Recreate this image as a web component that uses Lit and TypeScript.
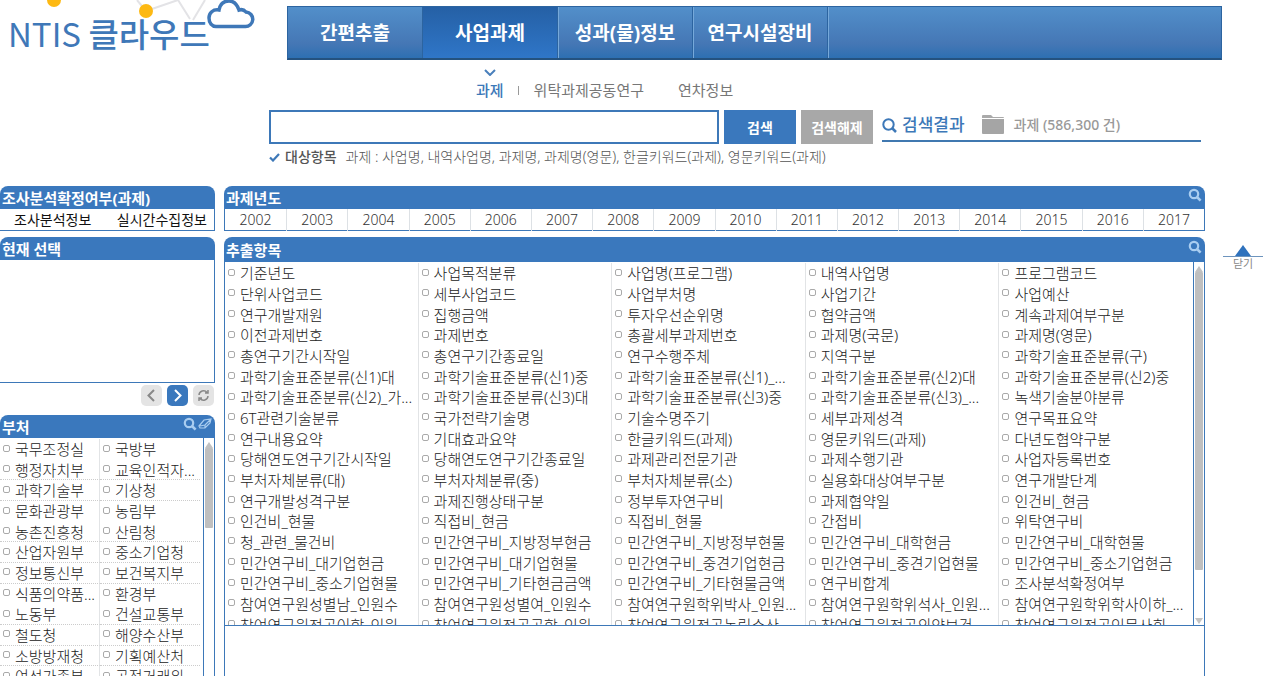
import { LitElement, html, css, svg } from "lit";
import { customElement, property } from "lit/decorators.js";
import { classMap } from "lit/directives/class-map.js";

const YEARS = Array.from({ length: 16 }, (_, i) => 2002 + i);

const FIELDS = [
  "기준년도", "사업목적분류", "사업명(프로그램)", "내역사업명", "프로그램코드",
  "단위사업코드", "세부사업코드", "사업부처명", "사업기간", "사업예산",
  "연구개발재원", "집행금액", "투자우선순위명", "협약금액", "계속과제여부구분",
  "이전과제번호", "과제번호", "총괄세부과제번호", "과제명(국문)", "과제명(영문)",
  "총연구기간시작일", "총연구기간종료일", "연구수행주체", "지역구분", "과학기술표준분류(구)",
  "과학기술표준분류(신1)대", "과학기술표준분류(신1)중", "과학기술표준분류(신1)_...", "과학기술표준분류(신2)대", "과학기술표준분류(신2)중",
  "과학기술표준분류(신2)_가...", "과학기술표준분류(신3)대", "과학기술표준분류(신3)중", "과학기술표준분류(신3)_...", "녹색기술분야분류",
  "6T관련기술분류", "국가전략기술명", "기술수명주기", "세부과제성격", "연구목표요약",
  "연구내용요약", "기대효과요약", "한글키워드(과제)", "영문키워드(과제)", "다년도협약구분",
  "당해연도연구기간시작일", "당해연도연구기간종료일", "과제관리전문기관", "과제수행기관", "사업자등록번호",
  "부처자체분류(대)", "부처자체분류(중)", "부처자체분류(소)", "실용화대상여부구분", "연구개발단계",
  "연구개발성격구분", "과제진행상태구분", "정부투자연구비", "과제협약일", "인건비_현금",
  "인건비_현물", "직접비_현금", "직접비_현물", "간접비", "위탁연구비",
  "청_관련_물건비", "민간연구비_지방정부현금", "민간연구비_지방정부현물", "민간연구비_대학현금", "민간연구비_대학현물",
  "민간연구비_대기업현금", "민간연구비_대기업현물", "민간연구비_중견기업현금", "민간연구비_중견기업현물", "민간연구비_중소기업현금",
  "민간연구비_중소기업현물", "민간연구비_기타현금금액", "민간연구비_기타현물금액", "연구비합계", "조사분석확정여부",
  "참여연구원성별남_인원수", "참여연구원성별여_인원수", "참여연구원학위박사_인원...", "참여연구원학위석사_인원...", "참여연구원학위학사이하_...",
  "참여연구원전공이학_인원...", "참여연구원전공공학_인원...", "참여연구원전공농림수산...", "참여연구원전공의약보건...", "참여연구원전공인문사회...",
];

const MINISTRIES = [
  "국무조정실", "국방부", "행정자치부", "교육인적자...", "과학기술부", "기상청",
  "문화관광부", "농림부", "농촌진흥청", "산림청", "산업자원부", "중소기업청",
  "정보통신부", "보건복지부", "식품의약품...", "환경부", "노동부", "건설교통부",
  "철도청", "해양수산부", "소방방재청", "기획예산처", "여성가족부", "공정거래위...",
];

const searchIcon = svg`<circle cx="6" cy="6" r="4.2" fill="none" stroke="currentColor" stroke-width="2.2"/><path d="M9 9l3.6 3.6" stroke="currentColor" stroke-width="2.6"/>`;

@customElement("check-list")
export class CheckList extends LitElement {
  @property({ attribute: false }) items: string[] = [];
  @property({ type: Boolean, reflect: true }) compact = false;

  static styles = css`
    :host { display: flex; min-width: 0; min-height: 0; overflow: hidden; }
    .list {
      flex: 1; min-width: 0; display: grid; height: 372px; padding-top: 1px;
      grid-template-columns: repeat(5, 1fr);
      grid-template-rows: repeat(18, 1fr);
    }
    .compact {
      height: 248px; margin-right: 3px;
      grid-template-columns: repeat(2, 1fr);
      grid-template-rows: repeat(12, 1fr);
    }
    label {
      display: flex; align-items: center; gap: 5px; padding-left: 3px; box-sizing: border-box;
      min-width: 0; overflow: hidden; white-space: nowrap;
      font-size: 15px; line-height: 20px; font-weight: 300; color: #222;
      border-right: 1px solid #e2e4e6;
    }
    .list:not(.compact) label:nth-child(5n), .compact label:nth-child(2n) { border-right: 0; }
    .ruled { border-bottom: 1px dotted #ccc; }
    input {
      appearance: none; flex: none; margin: 0 0 2px; width: 7px; height: 7px;
      border: 1px solid #aaa; border-radius: 2px; background: #fff;
    }
    .bar {
      flex: none; width: 11px; box-sizing: border-box; border-left: 1px solid #3d78b8;
      display: flex; flex-direction: column; align-items: center; padding: 4px 0 1px;
    }
    .arrow { width: 8px; height: 6px; fill: #c2c2c2; flex: none; }
    .thumb { width: 8px; height: 298px; background: #bfbfbf; border-radius: 1px; }
    .thumb.short { height: 80px; }
    .space { flex: 1; }
  `;

  render() {
    const skipped = [0, 3, 7];
    return html`
      <div class=${classMap({ list: true, compact: this.compact })}>
        ${this.items.map((t, i) => html`
          <label class=${classMap({ ruled: this.compact && !skipped.includes(Math.floor(i / 2)) })}>
            <input type="checkbox" />${t}
          </label>`)}
      </div>
      <div class="bar" aria-hidden="true">
        <svg class="arrow" viewBox="0 0 8 6"><path d="M4 0l4 6H0z" /></svg>
        <div class=${classMap({ thumb: true, short: this.compact })}></div>
        <div class="space"></div>
        <svg class="arrow" viewBox="0 0 8 6"><path d="M0 0h8L4 6z" /></svg>
      </div>`;
  }
}

@customElement("app-root")
export class AppRoot extends LitElement {
  static styles = css`
    :host {
      display: flex; flex-direction: column; height: 100vh; overflow: hidden; background: #fff;
      font-family: "Noto Sans", "Noto Sans CJK KR", sans-serif; color: #333;
    }
    * { box-sizing: border-box; }
    button { font-family: inherit; border: 0; padding: 0; cursor: pointer; }
    a { color: inherit; text-decoration: none; }
    ul { list-style: none; margin: 0; padding: 0; }
    header { display: flex; height: 60px; flex: none; padding-right: 43px; }
    .logo { width: 287px; flex: none; display: grid; }
    .logo > * { grid-area: 1 / 1; }
    .logo svg { width: 260px; height: 60px; }
    .name {
      padding: 9px 0 0 8px; font: 500 33px/48px "Noto Sans CJK KR", sans-serif;
      color: #3f78b8; white-space: nowrap;
    }
    .latin { font-family: "Liberation Sans Narrow", "Noto Sans CJK KR", sans-serif; font-weight: 400; }
    nav.main {
      flex: 1; display: flex; margin-top: 6px; border: 1px solid #2c64a0; border-bottom: 2px solid #24527f;
      background: linear-gradient(#528fca, #4577b5 72%, #2d70b2);
    }
    nav.main a {
      width: 135px; display: flex; align-items: center; justify-content: center;
      font-size: 19px; font-weight: 700; line-height: 28px; color: #fff; white-space: nowrap;
      border-right: 1px solid #2c64a0; box-shadow: 1px 0 #76a9da;
    }
    nav.main a.on { background: linear-gradient(#2560a5, #2f76c8); }
    .sub { flex: none; height: 50px; padding: 9px 0 0 476px; color: #777; font-size: 15px; line-height: 24px; }
    .chevron { display: block; width: 12px; height: 7px; margin: 0 0 2px 8px; }
    .subrow { display: flex; align-items: center; }
    .subrow a { font-weight: 400; }
    .subrow .on { color: #3d78b8; font-weight: 500; }
    .tick { width: 1px; height: 9px; background: #999; margin: 0 15px 0 14px; }
    .last { margin-left: 34px; }
    .search { flex: none; display: flex; gap: 5px; padding: 0 64px 0 269px; height: 34px; }
    .search input { width: 450px; border: 2px solid #3d78b8; background: #fff; padding: 0 8px; font-size: 15px; outline: 0; }
    .search button { width: 72px; font-size: 14px; font-weight: 700; color: #fff; background: #3a78bd; white-space: nowrap; }
    .search button.off { background: #a8a8a8; }
    .result {
      flex: 1; height: 32px; margin-left: 4px; display: flex; align-items: center; white-space: nowrap;
      border-bottom: 2px solid #4078b0; color: #3d78b8; font-size: 17px; font-weight: 500; line-height: 28px;
    }
    .lens { width: 15px; height: 15px; margin-right: 5px; }
    .folder { width: 22px; height: 20px; margin: 0 10px 0 17px; }
    .count { font-size: 14px; font-weight: 500; color: #999; }
    .hint {
      flex: none; display: flex; align-items: center; height: 42px; padding: 0 0 16px 269px;
      font-size: 14px; line-height: 20px; font-weight: 300; color: #555; white-space: nowrap;
    }
    .hint svg { width: 11px; height: 9px; margin-right: 5px; }
    .hint strong { font-weight: 500; margin-right: 9px; }
    .body { flex: 1; min-height: 0; display: flex; gap: 9px; }
    aside { width: 215px; flex: none; display: flex; flex-direction: column; }
    main { flex: 1; min-width: 0; display: flex; flex-direction: column; }
    .rail { flex: none; width: 51px; padding: 59px 2px 0 9px; }
    .close { width: 100%; background: none; color: #888; font-size: 11px; line-height: 14px; display: block; }
    .close svg { display: block; width: 40px; height: 12px; }
    h2 {
      margin: 0; flex: none; height: 23px; padding: 0 2px; border-radius: 8px 8px 0 0; background: #3a78bd; color: #fff;
      font-size: 15px; line-height: 24px; font-weight: 700; display: flex; align-items: center; justify-content: space-between;
    }
    h2 svg { width: 14px; height: 14px; color: #a9cdf0; }
    h2 .tools { display: flex; gap: 1px; align-self: flex-start; padding: 2px 1px 0 0; }
    .card { border: 1px solid #3d78b8; border-top: 0; }
    aside .card { border-left: 0; }
    .gap { margin-bottom: 6px; flex: none; }
    .modes { display: flex; height: 22px; align-items: center; justify-content: space-between; padding: 0 7px 0 14px; font-size: 14px; line-height: 20px; color: #111; }
    .years { display: grid; grid-template-columns: repeat(16, 1fr); height: 22px; font-size: 14px; line-height: 22px; font-weight: 300; text-align: center; }
    .years li + li { border-left: 1px solid #dde1e5; }
    .selected { height: 123px; flex: none; }
    .pager { display: flex; justify-content: flex-end; gap: 5px; padding: 2px 1px 9px 0; flex: none; }
    .pager button { width: 21px; height: 21px; border-radius: 5px; background: #e4e4e4; color: #888; display: grid; place-items: center; }
    .pager button.go { background: #3a78bd; color: #fff; }
    .pager svg { width: 13px; height: 13px; fill: none; stroke: currentColor; stroke-width: 2; }
    .fill { flex: 1; min-height: 0; display: flex; flex-direction: column; margin-bottom: -20px; }
    .side check-list { flex: 1; }
    .tall { height: 25px; padding-top: 1px; }
    .fields check-list { height: 364px; border-bottom: 1px solid #3d78b8; flex: none; }
  `;

  render() {
    const lens = html`<svg viewBox="0 0 14 14">${searchIcon}</svg>`;
    return html`
      <header>
        <a class="logo" href="#">
          <svg viewBox="0 0 260 60" aria-hidden="true">
            <path d="M137 0l9 11 32-11 12 19M205 0l-12 20" fill="none" stroke="#e3e3e6" stroke-width="2" />
            <circle cx="54" cy="0" r="7" fill="#fdb913" /><circle cx="146" cy="11" r="7" fill="#fdb913" />
            <path d="M216 26.5h29a7 7 0 0 0 1-14.5 6.500 6.500 0 0 0-7-2C237 4 234 1 229 1s-9 3-10 9c-6-1-10 3-10 8s3 8.500 7 8.500z" fill="#fff" stroke="#3f78b8" stroke-width="3.500" />
          </svg>
          <span class="name"><span class="latin">NTIS</span> 클라우드</span>
        </a>
        <nav class="main">
          <a href="#">간편추출</a><a href="#" class="on">사업과제</a><a href="#">성과(물)정보</a><a href="#">연구시설장비</a>
        </nav>
      </header>
      <nav class="sub">
        <svg class="chevron" viewBox="0 0 12 7"><path d="M1 1l5 5 5-5" fill="none" stroke="#4a80bc" stroke-width="2" /></svg>
        <div class="subrow">
          <a href="#" class="on">과제</a><span class="tick"></span><a href="#">위탁과제공동연구</a><a href="#" class="last">연차정보</a>
        </div>
      </nav>
      <form class="search" @submit=${(e: Event) => e.preventDefault()}>
        <input type="text" aria-label="검색어" />
        <button>검색</button>
        <button type="button" class="off">검색해제</button>
        <div class="result">
          <svg class="lens" viewBox="0 0 15 15"><circle cx="6.500" cy="6.500" r="5.200" fill="none" stroke="currentColor" stroke-width="2" /><path d="M10 10l4 4" stroke="currentColor" stroke-width="2.500" /></svg>
          검색결과
          <svg class="folder" viewBox="0 0 22 20"><path d="M0 3V1q0-1 1-1h8l2 2h10q1 0 1 1z" fill="#aaa" /><path d="M0 4h22v14q0 1-1 1H1q-1 0-1-1z" fill="#a5a5a5" /></svg>
          <span class="count">과제 (586,300 건)</span>
        </div>
      </form>
      <div class="hint">
        <svg viewBox="0 0 11 9"><path d="M1 4.500l3 3L10 1" fill="none" stroke="#3d78b8" stroke-width="2.200" /></svg>
        <strong>대상항목</strong>과제 : 사업명, 내역사업명, 과제명, 과제명(영문), 한글키워드(과제), 영문키워드(과제)
      </div>
      <div class="body">
        <aside>
          <h2>조사분석확정여부(과제)</h2>
          <div class="card modes gap"><a href="#">조사분석정보</a><a href="#">실시간수집정보</a></div>
          <h2>현재 선택</h2>
          <div class="card selected"></div>
          <div class="pager">
            <button aria-label="이전"><svg viewBox="0 0 13 13"><path d="M9 1L3.500 6.500 9 12" /></svg></button>
            <button aria-label="다음" class="go"><svg viewBox="0 0 13 13"><path d="M4 1l5.500 5.500L4 12" /></svg></button>
            <button aria-label="새로고침"><svg viewBox="0 0 13 13"><path d="M2 6a4.500 4.500 0 0 1 8-2.500M11 7a4.500 4.500 0 0 1-8 2.500M11 1v3H8M2 12V9h3" stroke-width="1.500" /></svg></button>
          </div>
          <h2>부처<span class="tools">${lens}<svg viewBox="0 0 14 14"><path d="M1 9l5-6 7-1-1 4-5 5H2zM2 9l5-1 5-5M7 8v3" fill="none" stroke="currentColor" stroke-width="1.200" /></svg></span></h2>
          <div class="card fill side"><check-list compact .items=${MINISTRIES}></check-list></div>
        </aside>
        <main>
          <h2>과제년도<span class="tools">${lens}</span></h2>
          <ul class="card years gap">${YEARS.map((y) => html`<li>${y}</li>`)}</ul>
          <h2 class="tall">추출항목<span class="tools">${lens}</span></h2>
          <div class="card fill fields"><check-list .items=${FIELDS}></check-list></div>
        </main>
        <div class="rail">
          <button class="close"><svg viewBox="0 0 40 12"><path d="M20 0l8 11H12z" fill="#2f72bd" /><path d="M0 11.500h40" stroke="#6d94bd" /></svg>닫기</button>
        </div>
      </div>`;
  }
}
